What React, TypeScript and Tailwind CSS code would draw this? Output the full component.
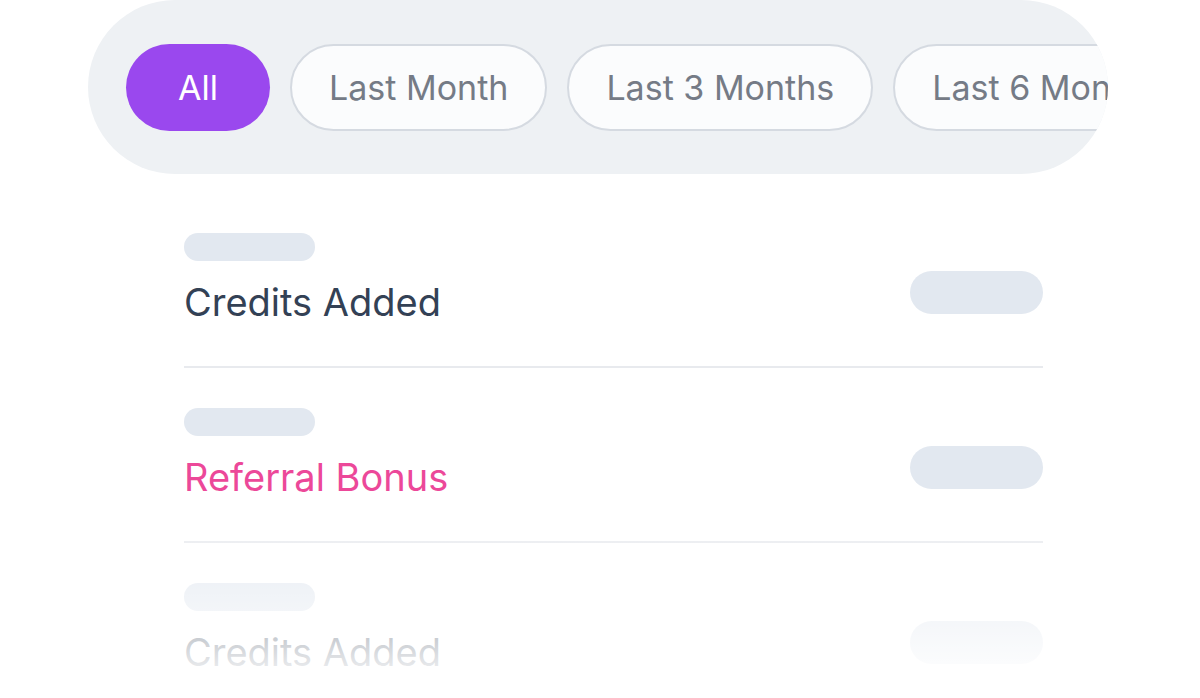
import React from "react";

const chips = ["Last Month", "Last 3 Months", "Last 6 Months", "Last Year"];

function Row({ title, color }: { title: string; color: string }) {
  return (
    <div className="flex flex-col">
      <div className="flex items-start justify-between pt-[40px] pb-[41px]">
        <div className="flex flex-col">
          <div className="h-[28px] w-[131px] rounded-full bg-[#e2e8f0]" />
          <div className={`mt-[18px] text-[38px] leading-[46px] ${color}`}>{title}</div>
        </div>
        <div className="mt-[38px] h-[43px] w-[133px] rounded-full bg-[#e2e8f0]" />
      </div>
      <div className="h-[2px] w-full bg-[#e8eaee]" />
    </div>
  );
}

export default function App() {
  return (
    <div
      className="relative h-[698px] w-[1200px] overflow-hidden bg-white"
      style={{ fontFamily: "Inter, 'Noto Sans', sans-serif" }}
    >
      <div className="ml-[88px] flex h-[174px] w-[1020px] items-center gap-[20px] overflow-hidden rounded-full bg-[#eef1f4] pl-[38px]">
        <div className="flex h-[87px] w-[144px] shrink-0 items-center justify-center rounded-full bg-[#9a48ee] text-[34px] text-white">
          All
        </div>
        {chips.map((c) => (
          <div
            key={c}
            className="flex h-[87px] shrink-0 items-center justify-center whitespace-nowrap rounded-full border-2 border-[#d5dae1] bg-[#fbfcfd] px-[37px] text-[34px] text-[#757b86]"
          >
            {c}
          </div>
        ))}
      </div>
      <div className="ml-[184px] mt-[19px] w-[859px]">
        <Row title="Credits Added" color="text-[#334155]" />
        <Row title="Referral Bonus" color="text-[#ec4899]" />
        <Row title="Credits Added" color="text-[#334155]" />
      </div>
      <div className="pointer-events-none absolute inset-x-0 top-[500px] bottom-0 bg-gradient-to-b from-white/0 to-white to-[95%]" />
    </div>
  );
}
